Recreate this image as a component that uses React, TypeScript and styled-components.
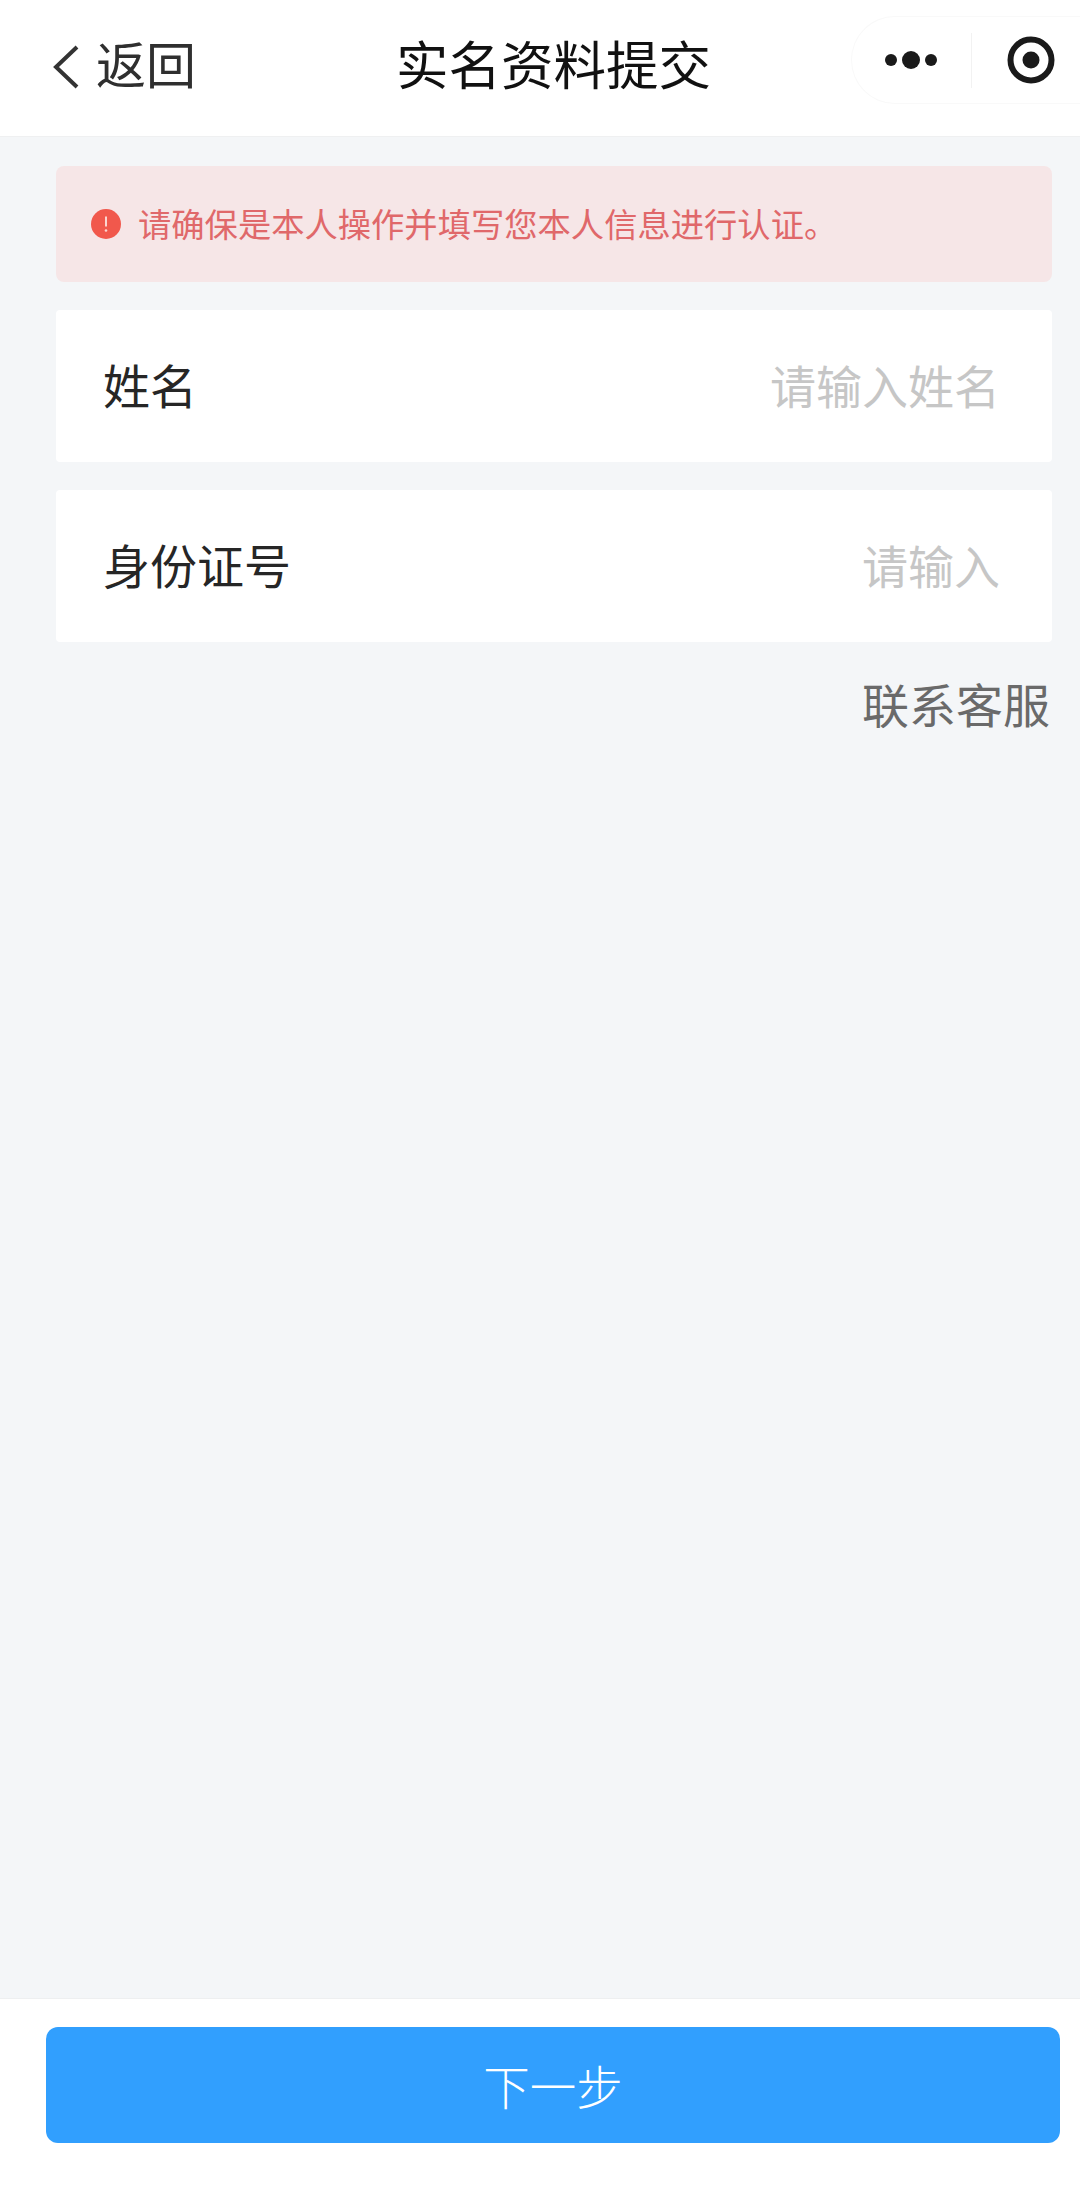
import React from "react"
import styled, { createGlobalStyle } from "styled-components"

const GlobalStyle = createGlobalStyle`
	html, body {
		margin: 0;
		padding: 0;
		background: #f4f6f8;
	}

	* {
		box-sizing: border-box;
	}
`

const Page = styled.div`
	width: 1080px;
	height: 2185px;

	display: grid;
	grid-template-rows: 137px 1fr 187px;

	background: #f4f6f8;
	font-family: "Noto Sans CJK SC", "Liberation Sans", sans-serif;
	font-weight: 400;
	overflow: hidden;
`

const NavBar = styled.header`
	display: grid;
	grid-template-columns: 396px auto 1fr;
	align-items: center;

	background: #ffffff;
	border-bottom: 1px solid #eff0f1;
`

const BackLink = styled.div`
	display: flex;
	align-items: center;
	gap: 16px;

	padding-left: 52px;
	margin-bottom: 13px;

	font-size: 50px;
	line-height: 60px;
	color: #2f2f2f;
`

const BackArrow = styled.svg`
	margin-top: 10px;
`

const NavTitle = styled.h1`
	margin: 0 0 12px;

	font-size: 52.5px;
	line-height: 64px;
	font-weight: 400;
	color: #111111;
`

const Capsule = styled.div`
	justify-self: end;

	width: 229px;
	height: 88px;
	margin-bottom: 16px;

	display: grid;
	grid-template-columns: 120px 1fr;
	align-items: center;

	border: 1px solid #f9f9f9;
	border-right: 0;
	border-radius: 44px 0 0 44px;
`

const MoreCell = styled.div`
	height: 55px;

	display: flex;
	align-items: center;
	justify-content: center;

	border-right: 1px solid #f2f2f2;
`

const RecordCell = styled.div`
	display: flex;
	align-items: center;
	justify-content: center;
	padding-left: 9px;
`

const Content = styled.main`
	display: flex;
	flex-direction: column;
	gap: 28px;

	padding: 29px 28px 0 56px;
`

const Alert = styled.div`
	height: 116px;

	display: flex;
	align-items: center;
	gap: 17px;

	padding-left: 35px;

	background: #f6e6e7;
	border-radius: 8px;

	font-size: 33.3px;
	color: #e0686a;
`

const AlertText = styled.span`
	line-height: 40px;
	margin-top: -2px;
`

const FieldRow = styled.div`
	height: 152px;

	display: flex;
	align-items: center;
	justify-content: space-between;

	padding: 0 52px 5px 47px;

	background: #ffffff;
	border-radius: 4px;
`

const FieldLabel = styled.label`
	font-size: 47px;
	line-height: 56px;
	color: #262626;
`

const FieldInput = styled.input`
	width: 400px;
	padding: 0;

	border: 0;
	outline: 0;
	background: transparent;

	font-family: inherit;
	font-size: 46px;
	line-height: 56px;
	text-align: right;

	&::placeholder {
		color: #c6c6c6;
		opacity: 1;
	}
`

const HelpLink = styled.div`
	align-self: flex-end;
	margin-top: 5px;
	margin-right: 2px;

	font-size: 47px;
	line-height: 56px;
	color: #6a6a6a;
`

const Footer = styled.footer`
	padding: 28px 20px 0 46px;

	background: #ffffff;
	border-top: 1px solid #eeeff0;
`

const NextButton = styled.button`
	width: 100%;
	height: 116px;
	padding: 0 0 2px;

	border: 0;
	border-radius: 12px;
	background: #319ffe;

	font-family: inherit;
	font-size: 46.5px;
	font-weight: 300;
	color: #ffffff;
`

const BackIcon = () => (
	<BackArrow width="28" height="46" viewBox="0 0 28 46" fill="none">
		<path d="M25 3 L4 23 L25 43" stroke="#333333" strokeWidth="4" />
	</BackArrow>
)

const MoreIcon = () => (
	<svg width="56" height="20" viewBox="0 0 56 20" fill="#1a1a1a">
		<circle cx="7" cy="10" r="6" />
		<circle cx="27" cy="10" r="9" />
		<circle cx="47" cy="10" r="6" />
	</svg>
)

const RecordIcon = () => (
	<svg width="48" height="48" viewBox="0 0 48 48" fill="none">
		<circle cx="24" cy="24" r="20.5" stroke="#1a1a1a" strokeWidth="6" />
		<circle cx="24" cy="24" r="8.5" fill="#1a1a1a" />
	</svg>
)

const WarnIcon = () => (
	<svg width="30" height="30" viewBox="0 0 30 30">
		<circle cx="15" cy="15" r="15" fill="#f1584c" />
		<path d="M15 7.5 V17.5" stroke="#fbd5d0" strokeWidth="2" />
		<circle cx="15" cy="21.5" r="1.3" fill="#fbd5d0" />
	</svg>
)

export default function App() {
	return (
		<>
			<GlobalStyle />
			<Page>
				<NavBar>
					<BackLink>
						<BackIcon />
						返回
					</BackLink>
					<NavTitle>实名资料提交</NavTitle>
					<Capsule>
						<MoreCell>
							<MoreIcon />
						</MoreCell>
						<RecordCell>
							<RecordIcon />
						</RecordCell>
					</Capsule>
				</NavBar>
				<Content>
					<Alert>
						<WarnIcon />
						<AlertText>请确保是本人操作并填写您本人信息进行认证。</AlertText>
					</Alert>
					<FieldRow>
						<FieldLabel>姓名</FieldLabel>
						<FieldInput placeholder="请输入姓名" />
					</FieldRow>
					<FieldRow>
						<FieldLabel>身份证号</FieldLabel>
						<FieldInput placeholder="请输入" />
					</FieldRow>
					<HelpLink>联系客服</HelpLink>
				</Content>
				<Footer>
					<NextButton>下一步</NextButton>
				</Footer>
			</Page>
		</>
	)
}
